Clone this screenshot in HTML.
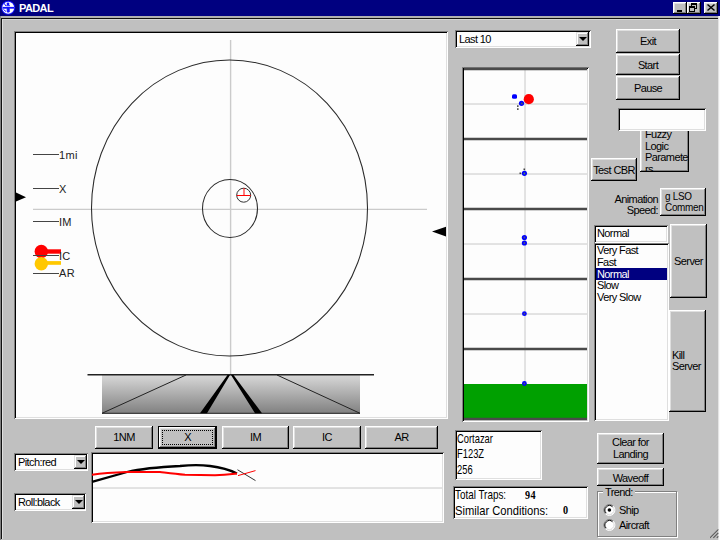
<!DOCTYPE html>
<html><head><meta charset="utf-8"><style>
*{margin:0;padding:0;box-sizing:border-box}
html,body{width:720px;height:540px;overflow:hidden;background:#c0c0c0;font-family:"Liberation Sans",sans-serif;font-size:11px;color:#000;letter-spacing:-0.6px}
.a{position:absolute}
.btn{position:absolute;background:#c0c0c0;box-shadow:inset -1px -1px #000,inset 1px 1px #fff,inset -2px -2px #808080,inset 2px 2px #dfdfdf;display:flex;align-items:center;justify-content:center;text-align:center;line-height:12px;white-space:nowrap}
.sunk{position:absolute;background:#fdfdfd;box-shadow:inset 1px 1px #808080,inset -1px -1px #fff,inset 2px 2px #000,inset -2px -2px #dfdfdf}
.dd{position:absolute;background:#c0c0c0;box-shadow:inset -1px -1px #000,inset 1px 1px #dfdfdf,inset -2px -2px #808080,inset 2px 2px #fff}
.dd:after{content:"";position:absolute;left:3px;top:5px;border-left:4px solid transparent;border-right:4px solid transparent;border-top:4px solid #000}
svg{position:absolute;left:0;top:0}
</style></head><body>
<!-- title bar -->
<div class="a" style="left:0;top:0;width:720px;height:16px;background:#000080"></div>
<svg width="20" height="16" style="left:0;top:0">
<circle cx="8.2" cy="7.8" r="7" fill="#1010ff"/>
<circle cx="8.2" cy="7.8" r="6" fill="#fff"/>
<rect x="2.5" y="6.9" width="11.5" height="1.8" fill="#1010ff"/>
<circle cx="8" cy="3.9" r="1.4" fill="#1010ff"/>
<rect x="6.3" y="5.2" width="3.6" height="1" fill="#1010ff"/>
<path d="M7.2 8.5h2v3.5h-2z M3.8 3L6 6M3.5 9.5L6 11.5" fill="#1010ff" stroke="#1010ff" stroke-width="1"/>
</svg>
<div class="a" style="left:19px;top:2px;font-weight:bold;color:#fff;font-size:11px;line-height:12px">PADAL</div>
<div class="btn" style="left:673px;top:2px;width:14px;height:12px"></div>
<div class="btn" style="left:687px;top:2px;width:14px;height:12px"></div>
<div class="btn" style="left:704px;top:2px;width:14px;height:12px"></div>
<svg width="720" height="20" shape-rendering="crispEdges">
<rect x="677" y="10" width="5" height="2" fill="#000"/>
<path d="M691 3h6v2h-6z M696 5h1v4h-1z M691 5h1v1h-1z M695 8h1v1h-1z" fill="#000"/>
<path d="M689 6h6v2h-6z M689 8h1v4h-1z M694 8h1v4h-1z M689 11h6v1h-6z" fill="#000"/>
</svg>
<svg width="720" height="20">
<path d="M707.5 4.5L714.5 10.5M714.5 4.5L707.5 10.5" stroke="#000" stroke-width="1.5"/>
</svg>
<!-- frame lines -->
<div class="a" style="left:0;top:16px;width:720px;height:2px;background:#b0b0b0"></div>
<div class="a" style="left:0;top:18px;width:718px;height:1px;background:#111"></div>
<div class="a" style="left:2px;top:19px;width:716px;height:1px;background:#d4d4d4"></div>
<div class="a" style="left:0;top:16px;width:1px;height:524px;background:#808080"></div>
<div class="a" style="left:1px;top:18px;width:1px;height:521px;background:#111"></div>
<div class="a" style="left:2px;top:19px;width:1px;height:520px;background:#dfdfdf"></div>
<div class="a" style="left:718px;top:16px;width:1px;height:524px;background:#e4e4e4"></div><div class="a" style="left:719px;top:16px;width:1px;height:524px;background:#fafafa"></div>

<!-- radar panel -->
<div class="sunk" style="left:14px;top:31px;width:434px;height:388px"></div>
<svg width="720" height="540">
<defs><linearGradient id="g1" x1="0" y1="0" x2="0" y2="1"><stop offset="0" stop-color="#d8d8d8"/><stop offset="1" stop-color="#808080"/></linearGradient></defs>
<line x1="230.6" y1="40" x2="230.6" y2="375" stroke="#cbcbcb" stroke-width="1.4"/>
<line x1="33" y1="209.4" x2="427" y2="209.4" stroke="#cbcbcb" stroke-width="1.4"/>
<ellipse cx="229.5" cy="208" rx="138" ry="148" fill="none" stroke="#2a2a2a" stroke-width="1.05"/>
<ellipse cx="230" cy="208.5" rx="27.5" ry="29" fill="none" stroke="#2a2a2a" stroke-width="1.05"/>
<circle cx="243.7" cy="195.2" r="7" fill="none" stroke="#333"/>
<path d="M236.7 195.5H250.8M244 188V195.5" stroke="#f00" stroke-width="1"/>
<circle cx="41.3" cy="251.5" r="6.7" fill="#f00"/>
<rect x="41" y="249.3" width="20" height="4.4" fill="#f00"/>
<circle cx="41.3" cy="263.7" r="6.7" fill="#ffc800"/>
<rect x="41" y="261.1" width="20" height="3.7" fill="#ffc800"/>
<path d="M33 154.5H59M33 188.5H59M33 221.5H59M33 255.5H59M33 273.5H59" stroke="#444"/>
<path d="M16 192.5L26 197.2L16 201.5Z" fill="#000"/>
<path d="M446 226.7L432 231.6L446 236.4Z" fill="#000"/>
<rect x="102" y="375" width="258" height="38.5" fill="url(#g1)"/>
<line x1="87.5" y1="374.8" x2="374" y2="374.8" stroke="#222" stroke-width="1.5"/>
<line x1="102" y1="413.3" x2="360" y2="413.3" stroke="#222"/>
<path d="M102 413.3L186 375M277 375L360 413.3" stroke="#222"/>
<path d="M227.5 375L230 375L207 413.3L200 413.3Z M231 375L233.5 375L262 413.3L255 413.3Z" fill="#000"/>
</svg>
<div class="a" style="left:59px;top:149px;line-height:12px;letter-spacing:0.3px;color:#222">1mi</div>
<div class="a" style="left:59px;top:183px;line-height:12px;letter-spacing:0.3px;color:#222">X</div>
<div class="a" style="left:59px;top:216px;line-height:12px;letter-spacing:0.3px;color:#222">IM</div>
<div class="a" style="left:59px;top:250px;line-height:12px;letter-spacing:0.3px;color:#222">IC</div>
<div class="a" style="left:59px;top:267px;line-height:12px;letter-spacing:0.3px;color:#222">AR</div>

<!-- range buttons -->
<div class="btn" style="left:95px;top:426px;width:58px;height:23px;padding-bottom:2px">1NM</div>
<div class="btn" style="left:158px;top:426px;width:59px;height:23px;box-shadow:inset -1px -1px #000,inset 1px 1px #000,inset -2px -2px #000,inset 2px 2px #fff,inset -3px -3px #808080,inset 3px 3px #dfdfdf;padding-bottom:2px">X<div class="a" style="left:4px;top:4px;right:4px;bottom:4px;border:1px dotted #000"></div></div>
<div class="btn" style="left:222px;top:426px;width:67px;height:23px;padding-bottom:2px">IM</div>
<div class="btn" style="left:293px;top:426px;width:68px;height:23px;padding-bottom:2px">IC</div>
<div class="btn" style="left:365px;top:426px;width:73px;height:23px;padding-bottom:2px">AR</div>

<!-- pitch/roll -->
<div class="sunk" style="left:14px;top:453px;width:74px;height:18px"><div class="a" style="left:4px;top:3px;line-height:12px">Pitch:red</div></div>
<div class="dd" style="left:74px;top:455px;width:13px;height:14px"></div>
<div class="sunk" style="left:14px;top:493px;width:72px;height:18px"><div class="a" style="left:4px;top:3px;line-height:12px">Roll:black</div></div>
<div class="dd" style="left:72px;top:495px;width:13px;height:14px"></div>

<!-- trend chart -->
<div class="sunk" style="left:91px;top:452px;width:353px;height:71px"></div>
<svg width="720" height="540">
<line x1="93" y1="488" x2="442" y2="488" stroke="#c8c8c8"/>
<path d="M92 481.9L127 472C140 469 160 467 180 466C190 465 200 464.7 210 466C222 467.5 230 470 237 473.5" fill="none" stroke="#000" stroke-width="2.3"/>
<path d="M92 474.75C100 473.5 110 472.5 127 472L160 472C168 473 175 474 185 474.8L215 475.25C225 474.8 232 474 237 473.5" fill="none" stroke="#f00" stroke-width="2"/>
<path d="M237.5 469.75L255.5 480.6" stroke="#333" stroke-width="1"/>
<path d="M238 475.6L255.5 470.6" stroke="#f00" stroke-width="1"/>
</svg>

<!-- last 10 -->
<div class="sunk" style="left:455px;top:30px;width:136px;height:18px"><div class="a" style="left:4px;top:3px;line-height:12px">Last 10</div></div>
<div class="dd" style="left:576px;top:32px;width:13px;height:14px"></div>

<!-- strip chart -->
<div class="sunk" style="left:462px;top:67px;width:127px;height:355px"></div>
<svg width="720" height="540">
<line x1="525" y1="69" x2="525" y2="418" stroke="#c8c8c8"/>
<path d="M464 104H587M464 174H587M464 244H587M464 314H587" stroke="#c8c8c8"/>
<rect x="464" y="384" width="123" height="34" fill="#00a000"/>
<path d="M464 69H587M464 139H587M464 209H587M464 279H587M464 349H587M464 419H587" stroke="#4a4a4a" stroke-width="2.3"/>
<rect x="512" y="94.3" width="5" height="4.5" rx="1.5" fill="#00f"/>
<circle cx="528.8" cy="99.2" r="5.1" fill="#f00"/>
<circle cx="521.5" cy="103.3" r="2.6" fill="#00f"/>
<circle cx="521.8" cy="103.5" r="1" fill="#555"/>
<rect x="517" y="105.3" width="1.6" height="1.6" fill="#444"/>
<rect x="517" y="108.3" width="1.6" height="1.6" fill="#444"/>
<circle cx="524.4" cy="173.3" r="2.6" fill="#00f"/><circle cx="524.4" cy="173.5" r="0.9" fill="#585"/>
<rect x="519.5" y="172.5" width="1.6" height="1.6" fill="#444"/><rect x="523.5" y="168.5" width="1.6" height="1.6" fill="#444"/>
<circle cx="524.4" cy="237.5" r="2.6" fill="#00f"/><circle cx="524.4" cy="237.5" r="0.9" fill="#557"/>
<circle cx="524.4" cy="243" r="2.6" fill="#00f"/><circle cx="524.4" cy="243" r="0.9" fill="#557"/>
<circle cx="524.4" cy="313.7" r="2.4" fill="#00f"/><circle cx="524.4" cy="313.7" r="0.9" fill="#557"/>
<circle cx="524.4" cy="383.5" r="2.4" fill="#00f"/><circle cx="524.4" cy="383.5" r="0.9" fill="#557"/>
</svg>

<!-- right column -->
<div class="btn" style="left:616px;top:29px;width:64px;height:24px">Exit</div>
<div class="btn" style="left:616px;top:54px;width:64px;height:21px">Start</div>
<div class="btn" style="left:616px;top:76px;width:64px;height:24px">Pause</div>
<div class="btn" style="left:640px;top:128px;width:49px;height:44px;overflow:hidden;justify-content:flex-start;align-items:flex-start"><div class="a" style="left:5px;top:1px;text-align:left;line-height:11.5px">Fuzzy<br>Logic<br>Paramete<br>rs</div></div>
<div class="sunk" style="left:618px;top:108px;width:88px;height:23px"></div>
<div class="btn" style="left:591px;top:158px;width:46px;height:23px">Test CBR</div>
<div class="a" style="left:600px;top:194px;width:58px;text-align:right;line-height:11px">Animation<br>Speed:</div>
<div class="btn" style="left:660px;top:188px;width:46px;height:28px;overflow:hidden;justify-content:flex-start"><div style="padding-left:5px;text-align:left;line-height:11.5px;transform:scaleX(0.9);transform-origin:5px 0;letter-spacing:-0.3px">g LSO<br>Commen</div></div>
<div class="sunk" style="left:594px;top:225px;width:74px;height:18px"><div class="a" style="left:3px;top:2px;line-height:12px">Normal</div></div>
<div class="sunk" style="left:594px;top:243px;width:75px;height:178px">
<div class="a" style="left:3px;top:2px;line-height:11.7px">Very Fast<br>Fast</div>
<div class="a" style="left:2px;top:25px;width:71px;height:12px;background:#000080;color:#fff;padding-left:1px;line-height:12px">Normal</div>
<div class="a" style="left:3px;top:37px;line-height:11.7px">Slow<br>Very Slow</div>
</div>
<div class="btn" style="left:670px;top:224px;width:37px;height:74px">Server</div>
<div class="btn" style="left:669px;top:310px;width:37px;height:102px;justify-content:flex-start"><div style="padding-left:3px;text-align:left;line-height:11.5px">Kill<br>Server</div></div>

<!-- info boxes -->
<div class="sunk" style="left:455px;top:430px;width:87px;height:50px">
<div class="a" style="left:2px;top:1px;font-size:13px;line-height:15.25px;letter-spacing:0;transform:scaleX(0.72);transform-origin:0 0;white-space:nowrap">Cortazar<br>F123Z<br>256</div></div>
<div class="sunk" style="left:453px;top:486px;width:135px;height:33px">
<div class="a" style="left:2px;top:1px;font-size:13px;line-height:15.5px;letter-spacing:0;transform:scaleX(0.76);transform-origin:0 0;white-space:nowrap">Total Traps:</div>
<div class="a" style="left:2px;top:16.5px;font-size:13px;line-height:15.5px;letter-spacing:0;transform:scaleX(0.86);transform-origin:0 0;white-space:nowrap">Similar Conditions:</div>
<div class="a" style="left:72px;top:2px;font-family:'Liberation Serif',serif;font-size:12px;font-weight:bold;line-height:14px;letter-spacing:0.5px;transform:scaleX(0.85);transform-origin:0 0">94</div>
<div class="a" style="left:110px;top:17px;font-family:'Liberation Serif',serif;font-size:12px;font-weight:bold;line-height:14px;letter-spacing:0;transform:scaleX(0.85);transform-origin:0 0">0</div>
</div>

<div class="btn" style="left:597px;top:433px;width:67px;height:31px"><div style="line-height:11.5px">Clear for<br>Landing</div></div>
<div class="btn" style="left:597px;top:468px;width:67px;height:18px;padding-top:1px">Waveoff</div>
<!-- trend group -->
<div class="a" style="left:597px;top:491px;width:80px;height:46px;border:1px solid #808080;box-shadow:1px 1px #fff, inset 1px 1px #fff"></div>
<div class="a" style="left:603px;top:486px;padding:0 2px;background:#c0c0c0;line-height:12px">Trend:</div>
<svg width="720" height="540">
<circle cx="609.4" cy="510" r="5" fill="#fff"/><path d="M605.51 513.89A5.5 5.5 0 0 1 613.29 506.11" fill="none" stroke="#808080"/><path d="M605.51 513.89A5.5 5.5 0 0 0 613.29 506.11" fill="none" stroke="#fff"/><path d="M606.22 513.18A4.5 4.5 0 0 1 612.58 506.82" fill="none" stroke="#000"/><path d="M606.22 513.18A4.5 4.5 0 0 0 612.58 506.82" fill="none" stroke="#dfdfdf"/><circle cx="609.4" cy="510" r="1.8" fill="#000"/>
<circle cx="609.4" cy="525" r="5" fill="#fff"/><path d="M605.51 528.89A5.5 5.5 0 0 1 613.29 521.11" fill="none" stroke="#808080"/><path d="M605.51 528.89A5.5 5.5 0 0 0 613.29 521.11" fill="none" stroke="#fff"/><path d="M606.22 528.18A4.5 4.5 0 0 1 612.58 521.82" fill="none" stroke="#000"/><path d="M606.22 528.18A4.5 4.5 0 0 0 612.58 521.82" fill="none" stroke="#dfdfdf"/>
<path d="M709 538L718 529M713 538L718 533M717 538L718 537" stroke="#fff" stroke-width="1"/>
<path d="M709.5 537.5L718 529M713 537.5L718 532.5M716.5 537.5L718 536" stroke="#555" stroke-width="1.2" transform="translate(0.3,0.3)"/>
</svg>
<div class="a" style="left:619px;top:504px;line-height:12px">Ship</div>
<div class="a" style="left:619px;top:519px;line-height:12px">Aircraft</div>
</body></html>
